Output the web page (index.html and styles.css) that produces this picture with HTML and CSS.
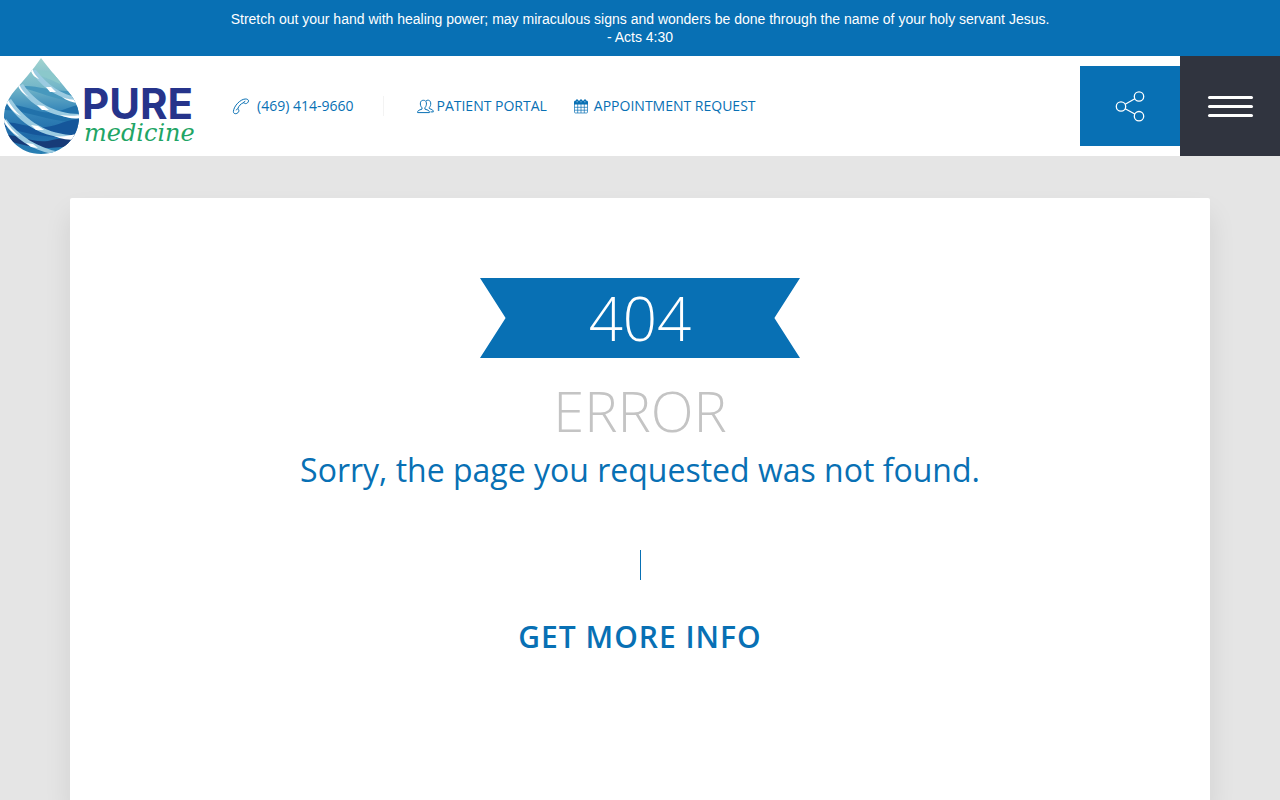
FILE: index.html
```
<!DOCTYPE html>
<html lang="en">
<head>
<meta charset="UTF-8">
<meta name="viewport" content="width=device-width, initial-scale=1.0">
<title>Page not found - Pure Medicine</title>
<link rel="stylesheet" href="styles.css">
</head>
<body>

<div class="verse">
  Stretch out your hand with healing power; may miraculous signs and wonders be done through the name of your holy servant Jesus.<br>
  - Acts 4:30
</div>

<header class="header">
  <a class="logo" href="#" aria-label="Pure Medicine">
    <svg width="200" height="100" viewBox="0 0 200 100">
      <defs>
        <linearGradient id="water" x1="0" y1="0" x2="0" y2="1">
          <stop offset="0" stop-color="#a5d6d0"/>
          <stop offset="0.3" stop-color="#76b8c9"/>
          <stop offset="0.55" stop-color="#3586b9"/>
          <stop offset="0.8" stop-color="#1f6aa8"/>
          <stop offset="1" stop-color="#2a83b5"/>
        </linearGradient>
        <clipPath id="drop">
          <path d="M41 2C49 13 62 27 71 39C76 46 79 53 79 61C79 82 62 98 41 98C20 98 4 82 4 61C4 53 7 45 12 38C21 27 33 14 41 2Z"/>
        </clipPath>
      </defs>
      <g clip-path="url(#drop)">
        <rect width="84" height="100" fill="url(#water)"/>
        <path d="M31 17C39 12 49 15 60 20V28C48 22 39 19 31 17Z" fill="#8bc8cb"/>
        <path d="M18 31C34 27 48 37 84 35V45C60 48 38 34 18 31Z" fill="#4798bd"/>
        <path d="M4 49C25 47 37 59 55 56C66 54 74 48 84 49V64C61 71 29 54 4 54Z" fill="#2171aa"/>
        <path d="M0 66C20 66 30 73 46 71C60 69 70 62 84 63V84C68 79 40 85 0 69Z" fill="#15569a"/>
        <path d="M5 79C20 79 32 87 48 85C58 83 68 80 80 81L74 90L49 92C32 92 20 88 5 84Z" fill="#173b78"/>
        <!-- light streaks across the drop -->
        <g fill="#9bcbe1">
          <path d="M31 14C39 29 55 42 80 46V42C62 39 47 29 36 14Z"/>
          <path d="M18 30C29 49 52 62 80 62V58C56 58 36 47 23 28Z"/>
          <path d="M6 46C20 69 46 84 78 82V79C50 80 26 66 11 43Z"/>
          <path d="M4 67C16 84 35 96 58 99L60 96C38 92 19 80 6 63Z"/>
        </g>
        <g fill="#fff">
          <path d="M28 17L32 12C33 16 36 20 39 23C34 21 32 18 31 15Z"/>
          <path d="M46 31L51 31L56 36L50 36Z"/>
          <path d="M62 41C67 43 73 44 80 44V47C73 47 67 45 62 41Z"/>
          <path d="M14 34L19 28C21 33 25 38 29 41C23 38 20 34 18 30Z"/>
          <path d="M37 49L44 50L49 54L42 54Z"/>
          <path d="M60 59C67 60 73 60 80 59V62C73 63 67 62 60 59Z"/>
          <path d="M4 50L7 42C11 50 16 56 21 60C14 57 10 52 7 47Z"/>
          <path d="M31 69L38 70L44 74L36 74Z"/>
          <path d="M54 80C62 81 70 80 80 77L77 84C69 84 61 83 54 80Z"/>
          <path d="M2 68L4 62C9 70 14 76 20 81C13 78 8 72 5 67Z"/>
          <path d="M26 87L33 88L38 92L31 91Z"/>
        </g>
      </g>
      <text class="logo-name" x="82" y="63">PURE</text>
      <text class="logo-sub" x="84" y="85">medicine</text>
    </svg>
  </a>

  <nav class="contact">
    <a class="phone" href="tel:4694149660">
      <svg width="18" height="18" viewBox="0 0 18 18" fill="none" stroke="currentColor">
        <path d="M1.4 14.6C1.6 11.6 3.4 8.6 5.7 6.2C7.9 3.9 10.6 2.2 13.2 2C15.2 1.9 16.7 2.7 16.5 4.1C16.3 5.4 14.9 6.7 13.5 6.6C12.3 6.5 12.1 5.4 11 5.9C8.8 6.9 6.8 9 6 11.2C5.6 12.3 6.9 12.4 6.9 13.7C6.9 15.2 5.2 16.7 3.7 16.7C2.2 16.7 1.4 16 1.4 14.6Z"/>
        <path d="M11.2 5.6L13.3 4.2M5.6 11.5L4.2 13.3"/>
      </svg>
      (469) 414-9660
    </a>
    <a class="portal" href="#">
      <svg width="17" height="16" viewBox="0 0 17 16" fill="none" stroke="currentColor">
        <path d="M5 9.8C3.5 8.3 3.2 6.4 3.4 4.8C3.7 3 4.8 2.3 6.4 2.3C8.1 2.3 9.2 3.1 9.4 4.9C9.6 6.6 9.2 8.3 7.9 9.8V11.1L11 12.2C12.1 12.7 12.4 13.4 12.4 14.6H.6C.6 13.4.9 12.7 2 12.2L5 11.1Z"/>
        <path d="M9.2 2.7C11.5 1.4 13.5 2.7 13.7 5C13.8 7.2 13.4 8.2 12.3 9.5V10.5L14.9 11.6C16 12.1 16.3 12.8 16.3 13.9H13.5"/>
      </svg>
      PATIENT PORTAL
    </a>
    <a class="appointment" href="#">
      <svg width="14" height="15" viewBox="0 0 14 15" fill="none" stroke="currentColor">
        <path d="M.5 5V13Q.5 14 1.5 14H12.5Q13.5 14 13.5 13V5M.5 8.3H13.5M.5 11.2H13.5M3.7 5V14M7 5V14M10.3 5V14" stroke-width=".7"/>
        <path d="M0 5.5V3Q0 1.5 1.5 1.5H2V.5H4V1.5H6V.5H8V1.5H10V.5H12V1.5H12.5Q14 1.5 14 3V5.5Z" fill="currentColor" stroke="none"/>
        <path d="M2.5 2.8H3.8M6.4 2.8H7.6M10.2 2.8H11.5" stroke="#fff" stroke-width=".6"/>
      </svg>
      APPOINTMENT REQUEST
    </a>
  </nav>

  <div class="actions">
    <button class="share" type="button" aria-label="Share">
      <svg width="30" height="32" viewBox="0 0 30 32" fill="none" stroke="currentColor" stroke-width="1.3">
        <circle cx="6" cy="16.5" r="4.7"/>
        <circle cx="24" cy="6.5" r="4.7"/>
        <circle cx="24" cy="26.2" r="4.7"/>
        <path d="M10.2 14.2L19.8 8.8M10.2 18.8L19.8 24"/>
      </svg>
    </button>
    <button class="menu" type="button" aria-label="Menu">
      <span></span>
      <span></span>
      <span></span>
    </button>
  </div>
</header>

<main class="page">
  <section class="card">
    <h1 class="ribbon">404</h1>
    <h2 class="error">ERROR</h2>
    <p class="message">Sorry, the page you requested was not found.</p>
    <div class="rule"></div>
    <h3 class="more">GET MORE INFO</h3>
  </section>
</main>

</body>
</html>
```
FILE: styles.css
```
:root {
  --blue: #0870b4;
  --dark: #30343f;
  --grey: #e5e5e5;
}
* { box-sizing: border-box; }
body {
  margin: 0;
  min-height: 100vh;
  display: flex;
  flex-direction: column;
  background: var(--grey);
  color: var(--blue);
  font-family: "Open Sans", Arial, sans-serif;
}
a {
  color: inherit;
  text-decoration: none;
}
h1, h2, h3, p { margin: 0; }
svg { display: block; }

.verse {
  padding: 10px 16px;
  background: var(--blue);
  color: #fff;
  font-family: "Liberation Sans", Helvetica, Arial, sans-serif;
  font-size: 14px;
  line-height: 18px;
  text-align: center;
}

.header {
  display: flex;
  align-items: center;
  min-height: 100px;
  background: #fff;
}
.logo-name {
  fill: #26348b;
  font-family: Inter, sans-serif;
  font-size: 42px;
  font-weight: 700;
}
.logo-sub {
  fill: #1fa566;
  font-family: "DejaVu Serif", serif;
  font-size: 24px;
  font-style: italic;
}
.contact {
  display: flex;
  align-items: center;
  margin-left: 32px;
  font-size: 14px;
  line-height: 20px;
  white-space: nowrap;
}
.contact a {
  display: flex;
  align-items: center;
}
.phone {
  gap: 7px;
  padding-right: 30px;
  border-right: 1px solid #f3f3f3;
}
.portal {
  gap: 2px;
  margin-left: 33px;
}
.appointment {
  gap: 6px;
  margin-left: 27px;
}

.actions {
  display: flex;
  align-items: center;
  margin-left: auto;
}
.actions button {
  display: flex;
  align-items: center;
  justify-content: center;
  width: 100px;
  padding: 0;
  border: none;
  color: #fff;
  cursor: pointer;
}
.share {
  height: 80px;
  background: var(--blue);
}
.menu {
  flex-direction: column;
  gap: 6px;
  height: 100px;
  background: var(--dark);
}
.menu span {
  width: 45px;
  height: 3px;
  border-radius: 2px;
  background: #fff;
}

.page {
  flex: 1;
  display: flex;
  padding: 42px 70px 0;
}
.card {
  flex: 1;
  display: flex;
  flex-direction: column;
  align-items: center;
  padding: 80px 20px;
  background: #fff;
  border-radius: 2px 2px 0 0;
  box-shadow: 0 16px 28px rgba(0, 0, 0, 0.09);
  text-align: center;
}
.ribbon {
  width: 320px;
  max-width: 100%;
  background: var(--blue);
  clip-path: polygon(0 0, 100% 0, 92% 50%, 100% 100%, 0 100%, 8% 50%);
  color: #fff;
  font-size: 60px;
  font-weight: 300;
  line-height: 80px;
}
.error {
  margin-top: 16px;
  color: #c4c4c4;
  font-size: 56px;
  font-weight: 300;
  line-height: 72px;
}
.message {
  font-size: 32px;
  line-height: 48px;
}
.rule {
  width: 1px;
  height: 30px;
  margin: 56px 0 36px;
  background: var(--blue);
}
.more {
  font-size: 30px;
  font-weight: 600;
  letter-spacing: 1px;
  line-height: 42px;
}
```
